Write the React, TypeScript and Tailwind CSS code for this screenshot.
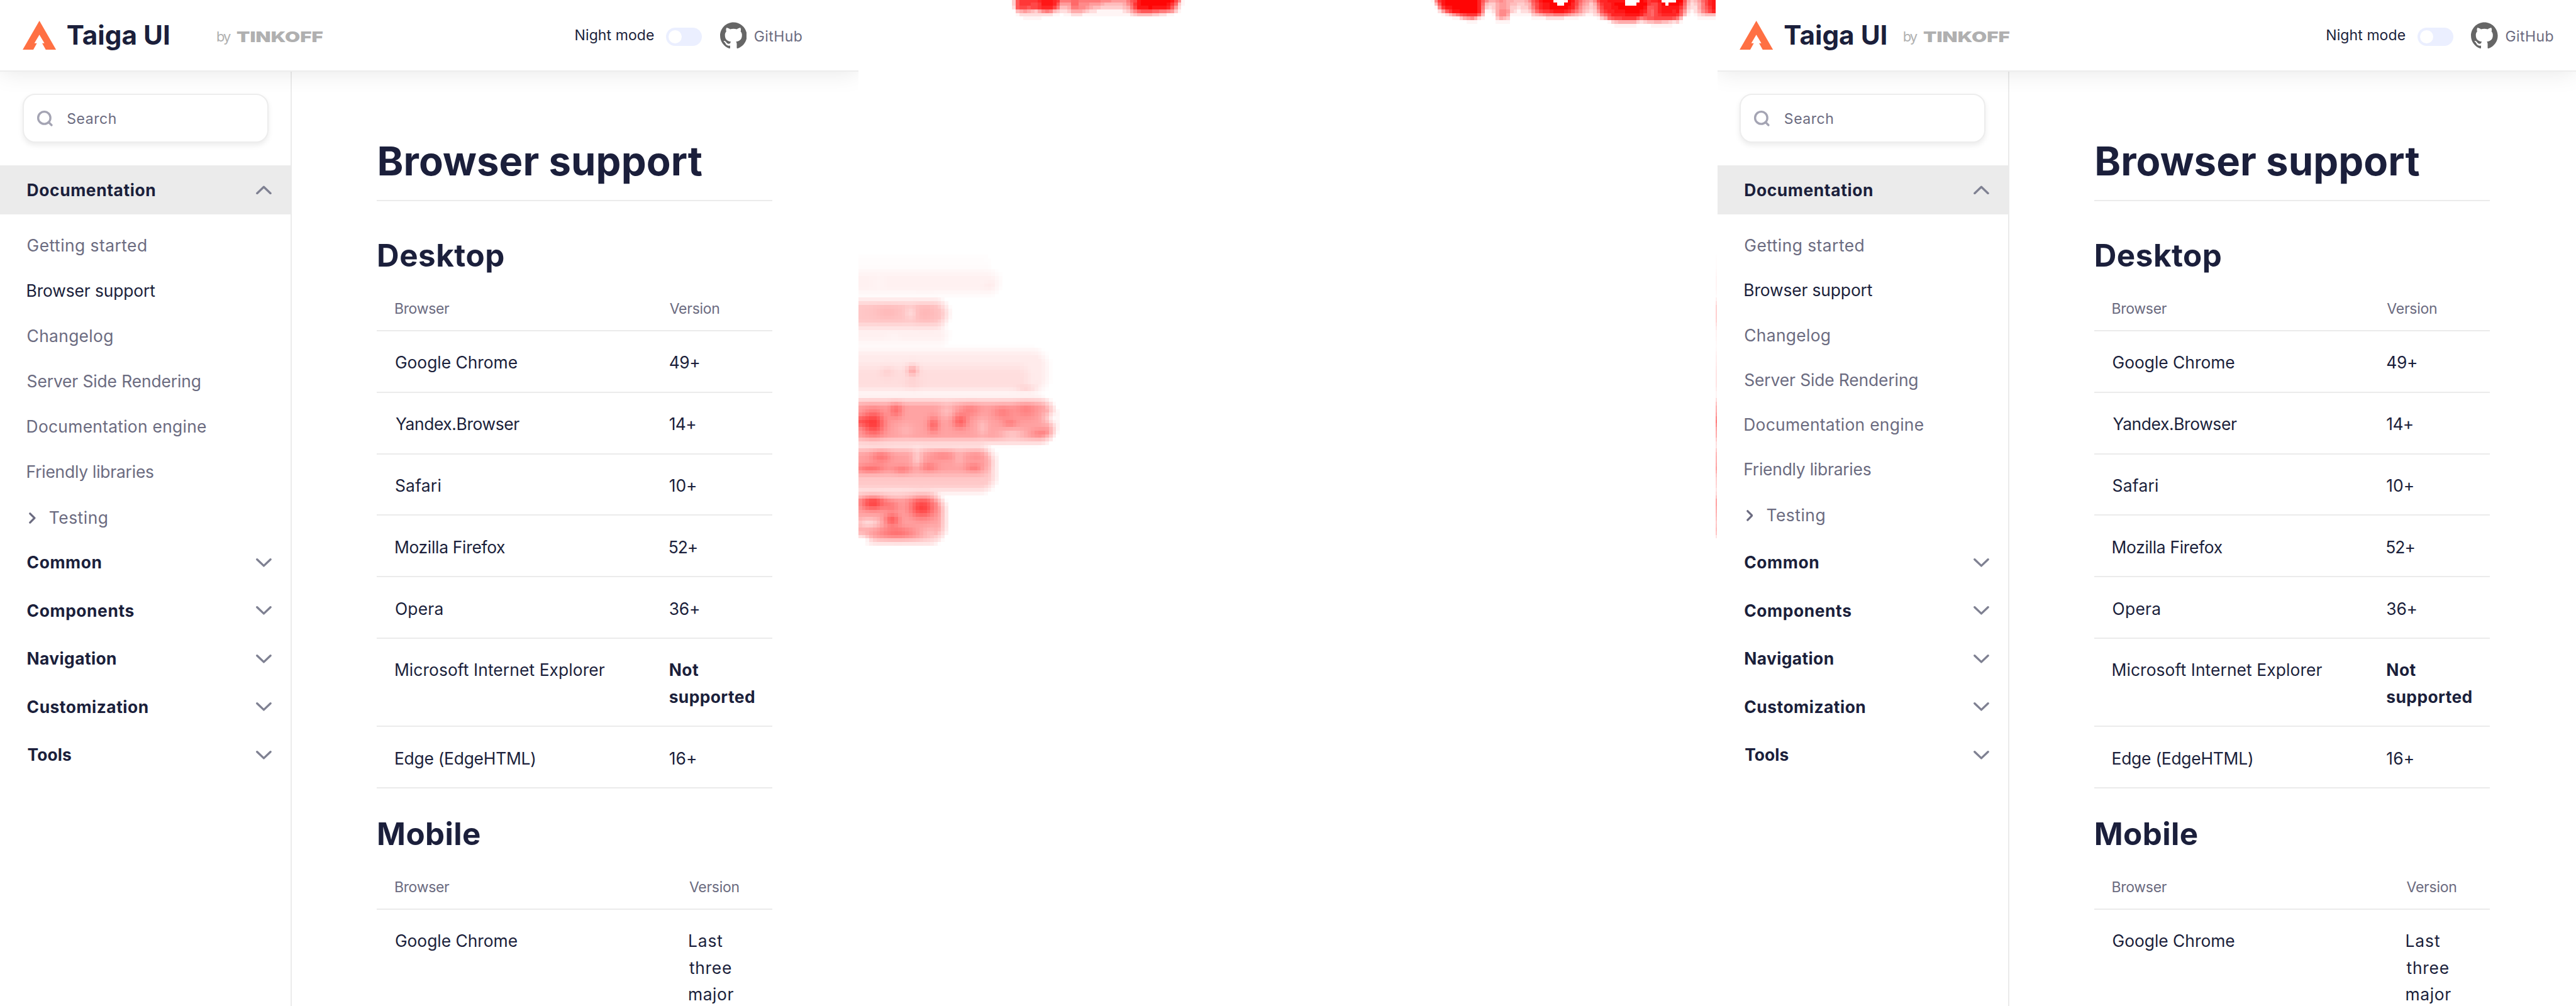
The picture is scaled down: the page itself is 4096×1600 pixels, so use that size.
import { useLayoutEffect, useRef, useState } from "react";
import type { CSSProperties } from "react";
import { SiGithub } from "react-icons/si";

// One design pixel in screen pixels.
const U = 8 / 9;

// Text whose inked part starts at the left edge of its box and spans `w` design pixels.
function Fit({ text, w, className = "" }: { text: string; w: number; className?: string }) {
  const ref = useRef<HTMLSpanElement>(null);
  const [style, setStyle] = useState<CSSProperties>({});
  useLayoutEffect(() => {
    const el = ref.current;
    const ctx = document.createElement("canvas").getContext("2d");
    if (!el || !ctx) return;
    const cs = getComputedStyle(el);
    ctx.font = `${cs.fontWeight} ${cs.fontSize} ${cs.fontFamily}`;
    const m = ctx.measureText(text);
    const ink = m.actualBoundingBoxLeft + m.actualBoundingBoxRight;
    const spacing = (w * U - ink) / (text.length - 1);
    setStyle({ letterSpacing: spacing, marginLeft: m.actualBoundingBoxLeft, marginRight: -spacing });
  }, [text, w]);
  return (
    <span ref={ref} style={style} className={`inline-block whitespace-nowrap ${className}`}>
      {text}
    </span>
  );
}

function Logo() {
  return (
    <svg viewBox="0 0 60 52" className="h-[46.2px] w-[53.3px] shrink-0" fill="#ff7043">
      <path d="M30 0 L60 52 H41.5 L35 40.3 H39 L30 25 L21 40.3 H25.5 L19 52 H0 Z" />
    </svg>
  );
}

function Header({ second }: { second: boolean }) {
  return (
    <header className={`relative z-10 flex h-[114px] items-center border-b-2 border-[#ededed] bg-white pl-[35.6px] shadow-[0_0_36px_rgba(0,0,0,0.1)] ${second ? "pr-[35.4px]" : "pr-[89.4px]"}`}>
      <Logo />
      <div className={`ml-[17.8px] text-[42.3px] leading-[56px] font-bold text-[#1b1f3b] ${second ? "w-[189.3px]" : "w-[238.2px]"}`}>
        <Fit text="Taiga UI" w={182.5} />
      </div>
      <div className="mt-1 w-[31.5px] text-[22px] leading-[30px] text-[#b0b0b0]">
        <Fit text="by" w={25} />
      </div>
      <svg viewBox="0 0 160 36" className="mt-[3px] h-[32px] w-[142.2px] overflow-visible" fill="#b0b0b0">
        <text x="0" y="27.6" textLength="155" lengthAdjust="spacingAndGlyphs" className="font-['Inter'] text-[26.5px] font-black">
          TINKOFF
        </text>
      </svg>
      <div className="ml-auto text-[23px] leading-8 text-[#1b1f3b]">
        <Fit text="Night mode" w={140} />
      </div>
      <div className="mt-[5px] ml-[19px] flex h-[28.4px] w-[56.9px] items-center rounded-full bg-[#ebefff] pl-[3.6px]">
        <div className="size-[21.3px] rounded-full bg-white" />
      </div>
      <SiGithub className="mt-[1px] ml-[28.4px] size-[42.6px] text-[#666666]" />
      <div className="mt-1 ml-[12.4px] text-[23px] leading-8 text-[#6b6b80]">
        <Fit text="GitHub" w={84.5} />
      </div>
    </header>
  );
}

function Chevron({ up = false }: { up?: boolean }) {
  return (
    <svg viewBox="0 0 28 16" className="h-[14.2px] w-[24.9px]" fill="none" stroke="#7f8192" strokeWidth="3.8" strokeLinecap="round" strokeLinejoin="round">
      <path d={up ? "M2 14 L14 2.6 L26 14" : "M2 2 L14 13.4 L26 2"} />
    </svg>
  );
}

const links: [string, number][] = [
  ["Getting started", 213],
  ["Browser support", 229],
  ["Changelog", 152.5],
  ["Server Side Rendering", 309.5],
  ["Documentation engine", 320],
  ["Friendly libraries", 225.5],
];

const sections: [string, number][] = [
  ["Common", 131.5],
  ["Components", 190],
  ["Navigation", 158],
  ["Customization", 215],
  ["Tools", 78],
];

function Sidebar({ second }: { second: boolean }) {
  return (
    <aside className="flex w-[464px] shrink-0 flex-col border-r-2 border-[#ebebeb] pt-[35.3px]">
      <div className="ml-[35.6px] flex h-[78.2px] w-[391px] shrink-0 items-center rounded-[20px] border-2 border-[#ededed] bg-white pl-5 shadow-[0_4px_8px_rgba(0,0,0,0.08)]">
        <svg viewBox="0 0 30 30" className="size-[26.6px]" fill="none" stroke="#a4a4b3" strokeWidth="3.8" strokeLinecap="round">
          <circle cx="14" cy="14" r="11" />
          <path d="M22 22 L27 27" />
        </svg>
        <div className="mt-[2px] ml-[23px] text-[23px] leading-8 text-[#6b6b80]">
          <Fit text="Search" w={86} />
        </div>
      </div>
      <div className="mt-[35.6px] flex h-[78.2px] shrink-0 items-center justify-between bg-[#ebebeb] pr-[30px] pl-[43.6px] text-[26.4px] leading-9 font-bold text-[#1b1f3b]">
        <Fit text="Documentation" w={228} />
        <Chevron up />
      </div>
      <nav className="flex h-[515.3px] shrink-0 flex-col pt-[14px] pl-[43.6px] text-[26.4px] text-[#6b6b80]">
        {links.map(([t, w]) => (
          <div key={t} className={`flex shrink-0 items-center ${second ? "h-[71.25px]" : "h-[72px]"} ${t === "Browser support" ? "text-[#1b1f3b]" : ""}`}>
            <Fit text={t} w={w} />
          </div>
        ))}
        <div className="mt-[1px] flex h-[72px] shrink-0 items-center">
          <svg viewBox="0 0 12 20" className="ml-[2.5px] h-[17.8px] w-[10.7px]" fill="none" stroke="#6b6b80" strokeWidth="3.6" strokeLinecap="round" strokeLinejoin="round">
            <path d="M2 2 L10 10 L2 18" />
          </svg>
          <div className="ml-[22px]">
            <Fit text="Testing" w={103.5} />
          </div>
        </div>
      </nav>
      {sections.map(([t, w]) => (
        <div key={t} className="flex h-[76.5px] shrink-0 items-center justify-between pr-[30px] pl-[43.6px] text-[26.4px] font-bold text-[#1b1f3b]">
          <Fit text={t} w={w} />
          <Chevron />
        </div>
      ))}
    </aside>
  );
}

type Row = { name: string; w: number; version: [string, number][]; bold?: boolean };

const desktop: Row[] = [
  { name: "Google Chrome", w: 218, version: [["49+", 52.5]] },
  { name: "Yandex.Browser", w: 222, version: [["14+", 45.5]] },
  { name: "Safari", w: 80.5, version: [["10+", 46.5]] },
  { name: "Mozilla Firefox", w: 196, version: [["52+", 48.5]] },
  { name: "Opera", w: 84, version: [["36+", 52]] },
  { name: "Microsoft Internet Explorer", w: 374.5, version: [["Not", 52], ["supported", 151]], bold: true },
  { name: "Edge (EdgeHTML)", w: 249, version: [["16+", 46.5]] },
];

const mobile: Row[] = [
  { name: "Google Chrome", w: 218, version: [["Last", 60], ["three", 75.5], ["major", 79.5]] },
];

function Table({ rows, wide = false }: { rows: Row[]; wide?: boolean }) {
  const first = wide ? "w-[467px] shrink-0" : "w-[435.8px] shrink-0";
  return (
    <div>
      <div className="flex h-[89.2px] border-b-2 border-[#ebebeb] pt-[37.5px] pl-[29.8px] text-[23px] leading-8 text-[#6b6b80]">
        <div className={first}>
          <Fit text="Browser" w={97} />
        </div>
        <Fit text="Version" w={88.5} />
      </div>
      {rows.map((r) => (
        <div
          key={r.name}
          className={`flex border-b-2 border-[#ebebeb] pt-[28.4px] pl-[29.8px] text-[26.4px] leading-[42.67px] text-[#1b1f3b] ${r.version.length === 1 ? "h-[97.78px]" : r.version.length === 2 ? "h-[140.44px]" : "h-[225px]"}`}
        >
          <div className={first}>
            <Fit text={r.name} w={r.w} />
          </div>
          <div className={`flex flex-col items-start ${r.bold ? "font-bold" : ""}`}>
            {r.version.map(([t, w]) => (
              <Fit key={t} text={t} w={w} />
            ))}
          </div>
        </div>
      ))}
    </div>
  );
}

function DocsPage({ second = false }: { second?: boolean }) {
  return (
    <section className="flex h-[1600px] min-w-0 flex-1 flex-col overflow-hidden bg-white">
      <Header second={second} />
      <div className="flex min-h-0 flex-1">
        <Sidebar second={second} />
        <main className="ml-[135.1px] w-[629.3px] shrink-0">
          <div className="h-[206px] border-b-2 border-[#ebebeb] pt-[102.4px] pl-[4.4px] text-[63.4px] leading-[80px] font-bold text-[#1b1f3b]">
            <Fit text="Browser support" w={577.5} />
          </div>
          <div className="mt-[53.9px] h-[64px] pl-[3px] text-[49.3px] leading-[64px] font-bold text-[#1b1f3b]">
            <Fit text="Desktop" w={224} />
          </div>
          <Table rows={desktop} />
          <div className="mt-[39.4px] h-[64px] pl-[3px] text-[49.3px] leading-[64px] font-bold text-[#1b1f3b]">
            <Fit text="Mobile" w={181} />
          </div>
          <Table rows={mobile} wide />
        </main>
      </div>
    </section>
  );
}

// Heat cells: one hex digit of intensity for each cell, row by row.
const heatA = [
  "3acccccdeeedc" + "888998888887776666" + "8abeffffffffeb71",
  "3acccbbceeeda" + "666997776665444445" + "79cefffffffec931",
  "2abbabbcdddb8" + "445887765443333334" + "58beeefeeeeda620",
  "0456543578743" + "223555432211111112" + "3579aaa998876310",
  "0122222222211" + "011222111111111111" + "1234444332211000",
  "0001111100000" + "000000000000000000" + "0000000000000000",
];
const heatB = [
  "17cefffffffffd" + "a7556" + "76554" + "4457a" + "cefff" + "1001" + "feb97" + "657b" + "ddeeeee" + "0001" + "fecdde" + "1001" + "ffa" + "5346" + "9bde",
  "04aefffffffffd" + "94335" + "66544" + "33459" + "bdeef" + "f00f" + "fdb86" + "5359" + "cddefff" + "000f" + "ffcbbd" + "f0ff" + "fe9" + "4235" + "8bde",
  "017ceefffffffd" + "83235" + "66533" + "23358" + "bdeef" + "ffff" + "eda75" + "4348" + "bddeeff" + "ffff" + "feaabd" + "eeee" + "ec8" + "3225" + "8ace",
  "0026aceefffffd" + "71125" + "77632" + "12236" + "9bccd" + "eeed" + "ca864" + "3236" + "acddeee" + "ffff" + "eda9bd" + "eeed" + "ea6" + "2124" + "79bd",
  "00012468abccc9" + "40015" + "77511" + "11113" + "45677" + "8887" + "65432" + "1123" + "79bdddd" + "eeee" + "dba9bc" + "dddd" + "c94" + "1012" + "3444",
  "00000011356752" + "10003" + "54300" + "00001" + "11122" + "2221" + "11100" + "0001" + "359abbc" + "ccca" + "89aabb" + "bbba" + "840" + "0001" + "1111",
  "00000000001110" + "00001" + "11100" + "00000" + "00000" + "0000" + "00000" + "0000" + "0013455" + "5553" + "234455" + "4432" + "310" + "0000" + "0000",
  "00000000000000" + "00000" + "00000" + "00000" + "00000" + "0000" + "00000" + "0000" + "0000111" + "1110" + "000111" + "1110" + "000" + "0000" + "0000",
];

// Bands that run in from the left edge: top, bottom, right end, intensity.
const bands: [number, number, number, number][] = [
  [35, 66, 236, 0.012],
  [66, 105, 251, 0.055],
  [119, 163, 158, 0.22],
  [163, 194, 158, 0.06],
  [207, 282, 337, 0.08],
  [236, 278, 303, 0.05],
  [297, 370, 350, 0.36],
  [380, 458, 244, 0.21],
  [386, 429, 234, 0.16],
  [466, 549, 153, 0.35],
];
// Hot and cool spots: x, y, x radius, y radius, intensity.
const spots: [number, number, number, number, number][] = [
  [236, 92, 12, 8, 0.08], [36, 86, 14, 14, -0.04], [120, 140, 22, 20, 0.06], [52, 138, 25, 14, 0.05], [94, 140, 10, 12, -0.08],
  [62, 182, 14, 8, -0.05],
  [97, 242, 10, 10, 0.35], [97, 268, 14, 14, 0.06], [52, 245, 12, 10, 0.08], [304, 277, 16, 7, 0.24],
  [27, 337, 20, 22, 0.4], [0, 334, 16, 10, 0.22], [67, 314, 12, 14, 0.2], [134, 340, 11, 14, 0.22], [182, 334, 14, 13, 0.25],
  [200, 314, 18, 12, 0.12], [258, 318, 18, 12, 0.14], [300, 314, 20, 16, 0.13], [271, 337, 14, 8, 0.13], [327, 355, 18, 8, 0.12],
  [158, 315, 13, 13, -0.1], [85, 350, 14, 12, -0.06], [276, 357, 22, 9, -0.14], [345, 328, 14, 12, -0.2], [222, 345, 10, 16, -0.1],
  [40, 397, 18, 12, 0.16], [22, 419, 26, 8, 0.18], [78, 421, 16, 8, 0.14], [150, 394, 22, 9, 0.1], [126, 416, 16, 9, 0.13],
  [206, 417, 14, 8, 0.13], [210, 395, 16, 8, 0.06], [105, 400, 10, 16, -0.16], [180, 400, 9, 12, -0.07],
  [26, 480, 22, 13, 0.38], [114, 488, 23, 19, 0.4], [60, 510, 14, 11, 0.28], [68, 533, 34, 11, 0.2], [18, 516, 22, 9, -0.2],
  [4, 547, 16, 12, -0.3], [128, 536, 18, 12, -0.1], [60, 486, 14, 10, 0.14],
];

const clamp = (v: number) => Math.max(0, Math.min(1, v));

function intensity(x: number, y: number) {
  let base = 0;
  for (const [top, bottom, end, a] of bands) {
    const r = Math.min(28, (bottom - top) / 2);
    const cy = (top + bottom) / 2;
    const dx = Math.max(0, x - (end - r));
    const dy = Math.max(0, Math.abs(y - cy) - ((bottom - top) / 2 - r));
    const d = dx > 0 ? Math.hypot(dx, dy) - r : dy - r;
    base += a * clamp(0.5 - d / 20);
  }
  const edge = clamp(base * 5);
  let v = base;
  for (const [sx, sy, rx, ry, a] of spots) {
    v += edge * a * Math.exp(-(((x - sx) / rx) ** 2 + ((y - sy) / ry) ** 2));
  }
  return clamp(v);
}

function HeatLayer() {
  const C = 6.43;
  const cells: { x: number; y: number; w: number; h: number; a: number }[] = [];
  const grid = (rows: string[], x0: number, cw: number) =>
    rows.forEach((row, j) => {
      const y0 = j === 0 ? 0 : 4 + (j - 1) * C;
      const y1 = 4 + j * C;
      row.split("").forEach((ch, i) => {
        const a = parseInt(ch, 16) / 15;
        if (a > 0) cells.push({ x: x0 + i * cw, y: y0, w: cw, h: y1 - y0, a: ch === "1" ? 0.04 : a * 0.98 });
      });
    });
  grid(heatA, 275, 6.58);
  grid(heatB, 1023.6, 6.45);
  for (let j = 0; j < 84; j++) {
    const y = 449 + j * C;
    for (let i = 0; i < 58; i++) {
      const a = intensity((i + 0.5) * C, y + C / 2 - 420);
      if (a > 0.005) cells.push({ x: i * C, y, w: C, h: C, a });
    }
    const a = intensity(0, y + C / 2 - 420) * 0.85;
    if (a > 0.005) cells.push({ x: 1533, y, w: 3, h: C, a });
  }
  return (
    <svg viewBox="0 0 1536 1800" preserveAspectRatio="none" className="size-full" shapeRendering="crispEdges" fill="#ff0000">
      {cells.map((c, k) => (
        <rect key={k} x={c.x} y={c.y} width={c.w} height={c.h} fillOpacity={c.a} />
      ))}
    </svg>
  );
}

export default function App() {
  return (
    <div className="flex h-[1600px] w-[4096px] overflow-hidden bg-white font-['Inter',sans-serif]">
      <DocsPage />
      <section className="h-[1600px] min-w-0 flex-1 overflow-hidden bg-white">
        <HeatLayer />
      </section>
      <DocsPage second />
    </div>
  );
}
